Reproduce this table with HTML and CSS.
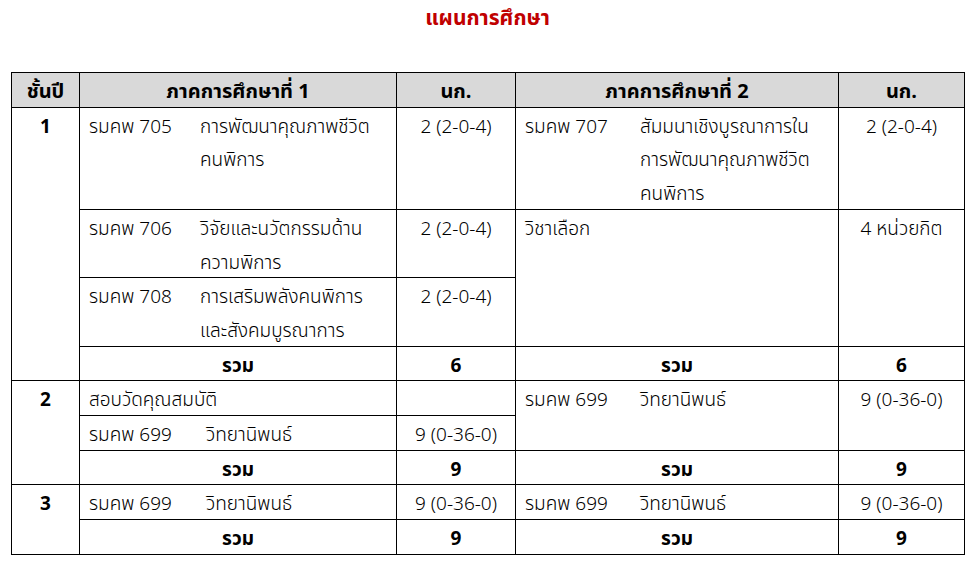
FILE: index.html
```html
<!DOCTYPE html>
<html lang="th">
<head>
<meta charset="utf-8">
<title>แผนการศึกษา</title>
<link rel="stylesheet" href="styles.css">
</head>
<body>
<h1 class="title">แผนการศึกษา</h1>
<table class="plan">
  <colgroup>
    <col class="c-year">
    <col class="c-sem">
    <col class="c-cr1">
    <col class="c-sem2">
    <col class="c-cr2">
  </colgroup>
  <thead>
    <tr>
      <th><div class="in">ชั้นปี</div></th>
      <th><div class="in">ภาคการศึกษาที่ 1</div></th>
      <th><div class="in">นก.</div></th>
      <th><div class="in">ภาคการศึกษาที่ 2</div></th>
      <th><div class="in">นก.</div></th>
    </tr>
  </thead>
  <tbody>
    <tr>
      <td class="year" rowspan="4"><div class="in">1</div></td>
      <td class="course"><div class="in crs"><span class="code">รมคพ 705</span><span class="name">การพัฒนาคุณภาพชีวิต<br>คนพิการ</span></div></td>
      <td class="cr"><div class="in">2 (2-0-4)</div></td>
      <td class="course s2"><div class="in crs"><span class="code">รมคพ 707</span><span class="name">สัมมนาเชิงบูรณาการใน<br>การพัฒนาคุณภาพชีวิต<br>คนพิการ</span></div></td>
      <td class="cr"><div class="in">2 (2-0-4)</div></td>
    </tr>
    <tr>
      <td class="course"><div class="in crs"><span class="code">รมคพ 706</span><span class="name">วิจัยและนวัตกรรมด้าน<br>ความพิการ</span></div></td>
      <td class="cr"><div class="in">2 (2-0-4)</div></td>
      <td class="course s2" rowspan="2"><div class="in">วิชาเลือก</div></td>
      <td class="cr" rowspan="2"><div class="in">4 หน่วยกิต</div></td>
    </tr>
    <tr>
      <td class="course"><div class="in crs"><span class="code">รมคพ 708</span><span class="name">การเสริมพลังคนพิการ<br>และสังคมบูรณาการ</span></div></td>
      <td class="cr"><div class="in">2 (2-0-4)</div></td>
    </tr>
    <tr class="sum">
      <td><div class="in">รวม</div></td>
      <td><div class="in">6</div></td>
      <td><div class="in">รวม</div></td>
      <td><div class="in">6</div></td>
    </tr>
    <tr>
      <td class="year" rowspan="3"><div class="in">2</div></td>
      <td class="course"><div class="in">สอบวัดคุณสมบัติ</div></td>
      <td class="cr"><div class="in"></div></td>
      <td class="course s2" rowspan="2"><div class="in crs"><span class="code">รมคพ 699</span><span class="name">วิทยานิพนธ์</span></div></td>
      <td class="cr" rowspan="2"><div class="in">9 (0-36-0)</div></td>
    </tr>
    <tr>
      <td class="course thesis"><div class="in crs"><span class="code">รมคพ 699</span><span class="name">วิทยานิพนธ์</span></div></td>
      <td class="cr"><div class="in">9 (0-36-0)</div></td>
    </tr>
    <tr class="sum">
      <td><div class="in">รวม</div></td>
      <td><div class="in">9</div></td>
      <td><div class="in">รวม</div></td>
      <td><div class="in">9</div></td>
    </tr>
    <tr>
      <td class="year" rowspan="2"><div class="in">3</div></td>
      <td class="course thesis"><div class="in crs"><span class="code">รมคพ 699</span><span class="name">วิทยานิพนธ์</span></div></td>
      <td class="cr"><div class="in">9 (0-36-0)</div></td>
      <td class="course s2"><div class="in crs"><span class="code">รมคพ 699</span><span class="name">วิทยานิพนธ์</span></div></td>
      <td class="cr"><div class="in">9 (0-36-0)</div></td>
    </tr>
    <tr class="sum">
      <td><div class="in">รวม</div></td>
      <td><div class="in">9</div></td>
      <td><div class="in">รวม</div></td>
      <td><div class="in">9</div></td>
    </tr>
  </tbody>
</table>
</body>
</html>
```
FILE: styles.css
```css
html, body {
  margin: 0;
  padding: 0;
  background: #ffffff;
}
body {
  font-family: Tahoma, "Leelawadee UI", "Noto Sans Thai", "Noto Sans", "DejaVu Sans", sans-serif;
  color: #000;
  padding: 0 11px;
}
.title {
  margin: 0;
  padding-top: 5px;
  height: 67px;
  text-align: center;
  color: #c00000;
  font-size: 21px;
  font-weight: bold;
  line-height: 28px;
}
.plan {
  border-collapse: collapse;
  width: 953px;
  table-layout: fixed;
  font-size: 19px;
  font-weight: 300;
  border: 1.5px solid #000;
}
.c-year { width: 68px; }
.c-sem { width: 317px; }
.c-cr1 { width: 119px; }
.c-sem2 { width: 323px; }
.c-cr2 { width: 126px; }
.plan th, .plan td {
  border: 1px solid #000;
  padding: 0 9px;
  line-height: 33.7px;
  vertical-align: top;
  white-space: nowrap;
}
.in {
  min-height: 33.7px;
  padding-top: 3px;
  margin-bottom: -3px;
}
.plan th {
  background: #d9d9d9;
  font-weight: bold;
  text-align: center;
  font-size: 20px;
}
.year {
  text-align: center;
  font-weight: bold;
}
.crs {
  display: flex;
}
.code {
  flex: 0 0 111px;
}
.s2 .code {
  flex-basis: 115px;
}
.thesis .code {
  flex-basis: 117px;
}
.name {
  flex: 1 1 auto;
}
.cr {
  text-align: center;
}
.sum td {
  text-align: center;
  font-weight: bold;
}
```
